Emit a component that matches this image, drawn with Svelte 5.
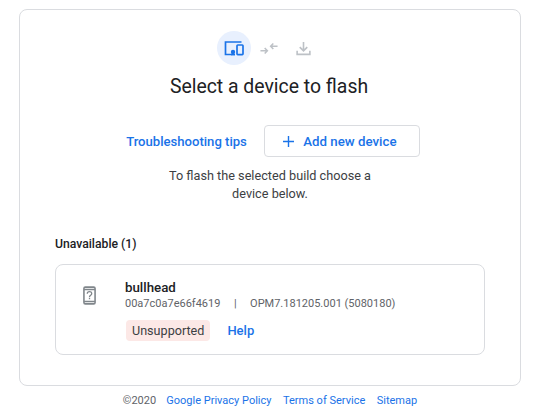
<script>
  const links = ['Google Privacy Policy', 'Terms of Service', 'Sitemap'];
</script>

<div class="page">
  <main class="card">
    <div class="steps">
      <span class="step active">
        <svg width="20" height="15" viewBox="0 0 20 15" fill="none" stroke="#1a73e8" stroke-width="1.7">
          <path d="M17.5 1H1.5v12.5h6" />
          <circle cx="9" cy="11" r="2.2" fill="#1a73e8" stroke="none"/>
          <path d="M7 13.6h4" />
          <rect x="13" y="4" width="6" height="9.6" rx="0.8" />
        </svg>
      </span>
      <span class="step">
        <svg width="18" height="13" viewBox="0 0 20 14" fill="none" stroke="#bdc1c6" stroke-width="1.7">
          <path d="M0.5 9.5h7.5M5.2 6.4l3 3.1-3 3.1" />
          <path d="M19.5 4.5H12M14.8 1.4l-3 3.1 3 3.1" />
        </svg>
      </span>
      <span class="step">
        <svg width="15" height="15" viewBox="0 0 16 16" fill="none" stroke="#bdc1c6" stroke-width="1.7">
          <path d="M8 1v9.5M4 6.6l4 4 4-4" />
          <path d="M1.2 10.5v3.8h13.6v-3.8" />
        </svg>
      </span>
    </div>

    <h1>Select a device to flash</h1>

    <div class="actions">
      <a href="#tips" class="tips">Troubleshooting tips</a>
      <button type="button" class="add">
        <svg width="11" height="11" viewBox="0 0 11 11" stroke="#1a73e8" stroke-width="1.4"><path d="M5.5 0v11M0 5.5h11" /></svg>
        <span>Add new device</span>
      </button>
    </div>

    <p class="hint">To flash the selected build choose a<br />device below.</p>

    <h2>Unavailable (1)</h2>

    <section class="device">
      <svg class="phone" width="13" height="19" viewBox="0 0 14 20" fill="none" stroke="#80868b" stroke-width="1.7">
        <rect x="1" y="1" width="12" height="18" rx="1.5" />
        <path d="M1 3.6h12M1 16.4h12" />
        <path d="M4.6 8c0-3 4.8-3 4.8 0 0 1.7-2.4 1.8-2.4 3.6" stroke-width="1.4" />
        <path d="M7 12.4v1.6" stroke-width="1.4" />
      </svg>
      <div class="info">
        <div class="name">bullhead</div>
        <div class="meta">
          <span>00a7c0a7e66f4619</span>
          <span class="sep">|</span>
          <span>OPM7.181205.001 (5080180)</span>
        </div>
        <div class="status">
          <span class="badge">Unsupported</span>
          <a href="#help" class="help">Help</a>
        </div>
      </div>
    </section>
  </main>

  <footer class="footer">
    <span class="copy">©2020</span>
    {#each links as link}
      <a href="#{link}">{link}</a>
    {/each}
  </footer>
</div>

<style>
  :global(body) {
    margin: 0;
    background: #fff;
  }
  .page {
    width: 540px;
    height: 417px;
    box-sizing: border-box;
    padding: 9px 19px 0;
    font-family: Roboto, "Noto Sans", sans-serif;
    color: #3c4043;
  }
  .card {
    box-sizing: border-box;
    height: 377px;
    border: 1px solid #dadce0;
    border-radius: 8px;
    padding: 21px 35px 0;
    display: flex;
    flex-direction: column;
  }
  .steps {
    display: flex;
    justify-content: center;
    align-items: center;
    gap: 1px;
    height: 34px;
    margin-right: 3px;
  }
  .step {
    width: 34px;
    height: 34px;
    border-radius: 50%;
    display: flex;
    align-items: center;
    justify-content: center;
  }
  .step.active {
    background: #e8f0fe;
  }
  h1 {
    margin: 9px 2px 0 0;
    font-size: 19.4px;
    line-height: 26px;
    font-weight: 400;
    text-align: center;
    color: #202124;
  }
  .actions {
    display: flex;
    justify-content: center;
    align-items: center;
    gap: 17px;
    margin-top: 25px;
    padding-left: 6px;
  }
  .tips {
    font-size: 13.1px;
    font-weight: 500;
    color: #1a73e8;
    text-decoration: none;
  }
  .add {
    width: 156px;
    height: 32px;
    background: #fff;
    border: 1px solid #dadce0;
    border-radius: 4px;
    display: flex;
    align-items: center;
    justify-content: center;
    gap: 9px;
    font-family: inherit;
    font-size: 13.3px;
    font-weight: 500;
    color: #1a73e8;
    padding: 0 4px 0 0;
  }
  .hint {
    margin: 10px 0 0;
    font-size: 12.7px;
    line-height: 18px;
    text-align: center;
    color: #3c4043;
  }
  h2 {
    margin: 32px 0 0;
    font-size: 12.2px;
    line-height: 18px;
    font-weight: 500;
    color: #202124;
  }
  .device {
    box-sizing: border-box;
    margin-top: 11px;
    height: 91px;
    border: 1px solid #dadce0;
    border-radius: 8px;
    padding: 14px 0 0 27px;
    display: flex;
    gap: 29px;
  }
  .phone {
    margin-top: 7px;
    flex: none;
  }
  .name {
    font-size: 13.3px;
    line-height: 18px;
    font-weight: 500;
    color: #202124;
  }
  .meta {
    display: flex;
    gap: 13.5px;
    font-size: 11px;
    line-height: 14px;
    color: #5f6368;
  }
  .status {
    display: flex;
    align-items: center;
    gap: 17px;
    margin-top: 9px;
  }
  .badge {
    background: #fce8e6;
    border-radius: 4px;
    margin-left: 1px;
    padding: 0 6px;
    font-size: 12.6px;
    line-height: 21px;
    color: #3c4043;
  }
  .help {
    font-size: 13px;
    font-weight: 500;
    color: #1a73e8;
    text-decoration: none;
  }
  .footer {
    display: flex;
    justify-content: center;
    gap: 11.5px;
    margin-top: 8px;
    font-size: 11px;
    line-height: 14px;
  }
  .footer a {
    color: #1a73e8;
    text-decoration: none;
  }
  .copy {
    color: #5f6368;
    margin-right: 4px;
    width: 28px;
    white-space: nowrap;
  }
</style>
